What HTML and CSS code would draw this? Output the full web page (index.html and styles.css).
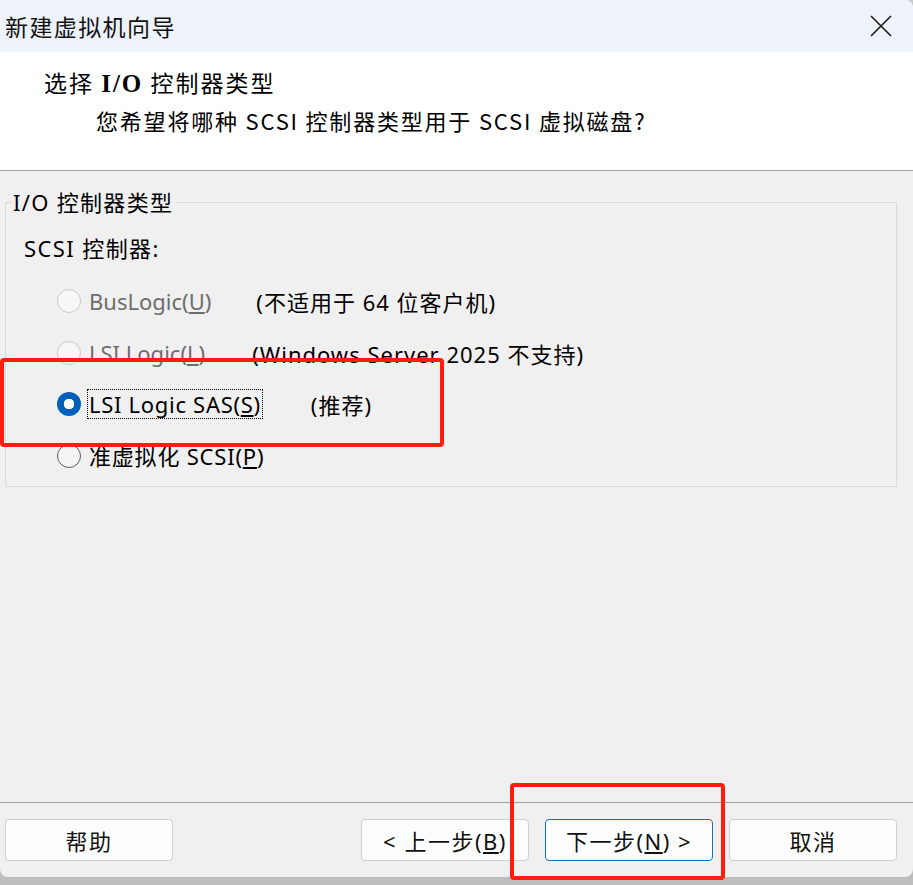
FILE: index.html
```html
<!DOCTYPE html>
<html lang="zh-CN">
<head>
<meta charset="utf-8">
<title>新建虚拟机向导</title>
<link rel="stylesheet" href="styles.css">
</head>
<body>
<div class="window">
  <div class="titlebar">
    <span class="title">新建虚拟机向导</span>
    <svg class="close" width="22" height="22" viewBox="0 0 22 22"><path d="M1 1 L21 21 M21 1 L1 21" stroke="#1a1a1a" stroke-width="1.6" fill="none"/></svg>
  </div>
  <div class="header">
    <div class="h-title">选择 <b class="io">I/O</b> 控制器类型</div>
    <div class="h-sub">您希望将哪种 SCSI 控制器类型用于 SCSI 虚拟磁盘?</div>
  </div>
  <div class="content">
    <fieldset class="group">
      <legend>I/O 控制器类型</legend>
      <div class="group-body">
        <div class="group-label">SCSI 控制器:</div>
        <div class="options">
          <div class="opt disabled">
            <span class="radio"></span>
            <span class="lbl">BusLogic(<u>U</u>)</span>
            <span class="note">(不适用于 64 位客户机)</span>
          </div>
          <div class="opt disabled">
            <span class="radio"></span>
            <span class="lbl">LSI Logic(<u>L</u>)</span>
            <span class="note note-wide">(Windows Server 2025 不支持)</span>
          </div>
          <div class="opt checked">
            <span class="radio"></span>
            <span class="lbl focus">LSI Logic SAS(<u>S</u>)</span>
            <span class="note note-rec">(推荐)</span>
          </div>
          <div class="opt">
            <span class="radio"></span>
            <span class="lbl lbl-wide">准虚拟化 SCSI(<u>P</u>)</span>
          </div>
        </div>
      </div>
    </fieldset>
  </div>
  <div class="footer">
    <button class="btn">帮助</button>
    <div class="spacer"></div>
    <button class="btn">&lt; 上一步(<u>B</u>)</button>
    <button class="btn primary">下一步(<u>N</u>) &gt;</button>
    <button class="btn">取消</button>
  </div>
</div>
<div class="mark mark-opt"></div>
<div class="mark mark-next"></div>
</body>
</html>
```

FILE: styles.css
```css
* { box-sizing: border-box; }
html, body { margin: 0; padding: 0; }
body {
  width: 913px;
  height: 885px;
  background: linear-gradient(#c9c9c9, #bdbdbd);
  font-family: "Noto Sans", "Noto Sans CJK SC", sans-serif;
  color: #000;
  position: relative;
  overflow: hidden;
}
.window {
  width: 913px;
  height: 877px;
  background: #f0f0f0;
  border-radius: 0 8px 8px 8px;
  display: flex;
  flex-direction: column;
  overflow: hidden;
}
.titlebar {
  height: 52px;
  background: #eef3f9;
  display: flex;
  align-items: center;
  justify-content: space-between;
  padding: 0 21px 0 5px;
}
.title {
  font-family: "Noto Sans CJK SC", sans-serif;
  font-size: 23px;
  letter-spacing: 1.4px;
  color: #111;
}
.close { display: block; }
.header {
  height: 119px;
  background: #fff;
  border-bottom: 1px solid #a0a0a0;
  padding: 14px 0 0 44px;
}
.h-title {
  font-family: "Noto Sans CJK SC", sans-serif;
  font-size: 23px;
  line-height: 32px;
  letter-spacing: 2px;
}
.io {
  font-family: "Liberation Serif", serif;
  font-weight: bold;
  font-size: 25px;
}
.h-sub {
  font-family: "Noto Sans CJK SC", sans-serif;
  font-size: 22px;
  line-height: 32px;
  padding-left: 52px;
  margin-top: 4px;
  letter-spacing: 1.8px;
}
.content {
  height: 631px;
  padding: 16px 16px 0 5px;
}
.group {
  margin: 0;
  border: 1px solid #dadada;
  padding: 0;
  height: 300px;
  font-size: 22px;
}
.group legend {
  padding: 0 3px 0 2px;
  margin-left: 5px;
  line-height: 30px;
  font-size: 22px;
  letter-spacing: 1.3px;
}
.group-body { padding-left: 18px; }
.group-label {
  margin-top: 16px;
  line-height: 30px;
  letter-spacing: 1.4px;
}
.options {
  display: flex;
  flex-direction: column;
  padding-left: 33px;
  margin-top: 12px;
}
.opt {
  display: flex;
  align-items: center;
  height: 51.7px;
}
.radio {
  width: 24px;
  height: 24px;
  border-radius: 50%;
  border: 1.5px solid #5d5d5d;
  background: #f5f5f5;
  flex: none;
  margin-right: 6px;
}
.opt.disabled .radio { border-color: #c8c8c8; background: #f7f7f7; }
.opt.disabled .lbl { color: #6d6d6d; }
.opt.checked .radio {
  border: none;
  background: radial-gradient(circle, #fff 0 5px, #005fb8 5.5px);
}
.lbl {
  line-height: 28px;
  padding: 0 1px;
  border: 1px solid transparent;
  letter-spacing: 0;
}
.lbl.focus { border: 1px dotted #000; letter-spacing: 0.7px; }
.lbl-wide { letter-spacing: 0.8px; }
.note { margin-left: 43px; letter-spacing: 1px; }
.note-wide { margin-left: 45px; }
.note-rec { margin-left: 48px; }
.footer {
  flex: 1;
  border-top: 1px solid #a0a0a0;
  display: flex;
  align-items: flex-start;
  padding: 16px 16px 0 5px;
  gap: 16px;
}
.spacer { flex: 1; }
.btn {
  width: 168px;
  height: 42px;
  background: #fdfdfd;
  border: 1px solid #d0d0d0;
  border-radius: 4px;
  font-family: "Noto Sans", "Noto Sans CJK SC", sans-serif;
  font-size: 22px;
  letter-spacing: 1.5px;
  color: #111;
  padding: 0;
}
.btn.primary { border-color: #1f6fbf; }
.mark {
  position: absolute;
  border: 4px solid #ff1d10;
  border-radius: 4px;
}
.mark-opt { left: 0; top: 358px; width: 444px; height: 89px; }
.mark-next { left: 510px; top: 783px; width: 215px; height: 97px; }
```
